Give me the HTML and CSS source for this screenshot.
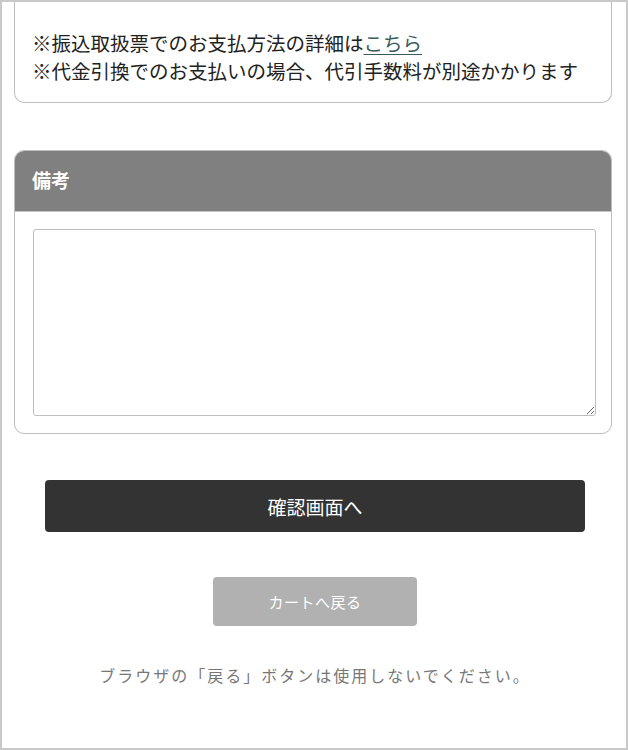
FILE: index.html
```html
<!DOCTYPE html>
<html lang="ja">
<head>
<meta charset="utf-8">
<link rel="stylesheet" href="styles.css">
</head>
<body>
<div class="frame">
  <div class="content">
    <div class="card card-top">
      <p class="note-line">※振込取扱票でのお支払方法の詳細は<a class="link" href="#">こちら</a></p>
      <p class="note-line">※代金引換でのお支払いの場合、代引手数料が別途かかります</p>
    </div>
    <div class="card card-remarks">
      <div class="card-head">備考</div>
      <div class="card-body">
        <textarea class="remarks"></textarea>
      </div>
    </div>
    <div class="actions">
      <button class="btn btn-primary">確認画面へ</button>
      <button class="btn btn-back">カートへ戻る</button>
      <p class="warn">ブラウザの「戻る」ボタンは使用しないでください。</p>
    </div>
  </div>
</div>
</body>
</html>
```

FILE: styles.css
```css
* { box-sizing: border-box; }
html, body { margin: 0; padding: 0; background: #fff; }
body {
  font-family: "Noto Sans CJK JP", "Noto Sans", sans-serif;
  color: #222;
}
.frame {
  width: 628px;
  height: 750px;
  border: 2px solid #c9c9c9;
  overflow: hidden;
  background: #fff;
}
.content {
  padding: 0 14px 0 12px;
}
.card {
  border: 1px solid #bdbdbd;
  border-radius: 10px;
  background: #fff;
}
.card-top {
  border-top: none;
  border-top-left-radius: 0;
  border-top-right-radius: 0;
  padding: 27px 16px 17px 17px;
}
.note-line {
  margin: 0;
  font-size: 19.5px;
  line-height: 28px;
  color: #222;
  white-space: nowrap;
}
.link {
  color: #3b5b5b;
  text-decoration: underline;
  text-underline-offset: 3px;
}
.card-remarks {
  margin-top: 47px;
  overflow: hidden;
}
.card-head {
  background: #808080;
  color: #fff;
  font-weight: bold;
  font-size: 19px;
  height: 61px;
  line-height: 58px;
  padding-left: 17px;
  border-bottom: 1px solid #c4c4c4;
}
.card-body {
  padding: 17px 15px 17px 18px;
}
.remarks {
  display: block;
  width: 100%;
  height: 187px;
  border: 1px solid #bdbdbd;
  border-radius: 3px;
  resize: vertical;
  background: #fff;
  margin: 0;
}
.actions {
  display: flex;
  flex-direction: column;
  align-items: center;
  padding-top: 46px;
}
.btn {
  border: none;
  color: #fff;
  font-family: "Noto Sans CJK JP", "Noto Sans", sans-serif;
  cursor: pointer;
}
.btn-primary {
  width: 540px;
  height: 52px;
  background: #333;
  border-radius: 4px;
  font-size: 19px;
  margin-left: 4px;
}
.btn-back {
  margin-top: 45px;
  width: 204px;
  height: 49px;
  background: #b1b1b1;
  border-radius: 4px;
  font-size: 15px;
  letter-spacing: 0.5px;
  margin-left: 4px;
}
.warn {
  margin: 38px 0 0 4px;
  font-size: 16px;
  letter-spacing: 2px;
  color: #777;
  line-height: 22px;
}
```
